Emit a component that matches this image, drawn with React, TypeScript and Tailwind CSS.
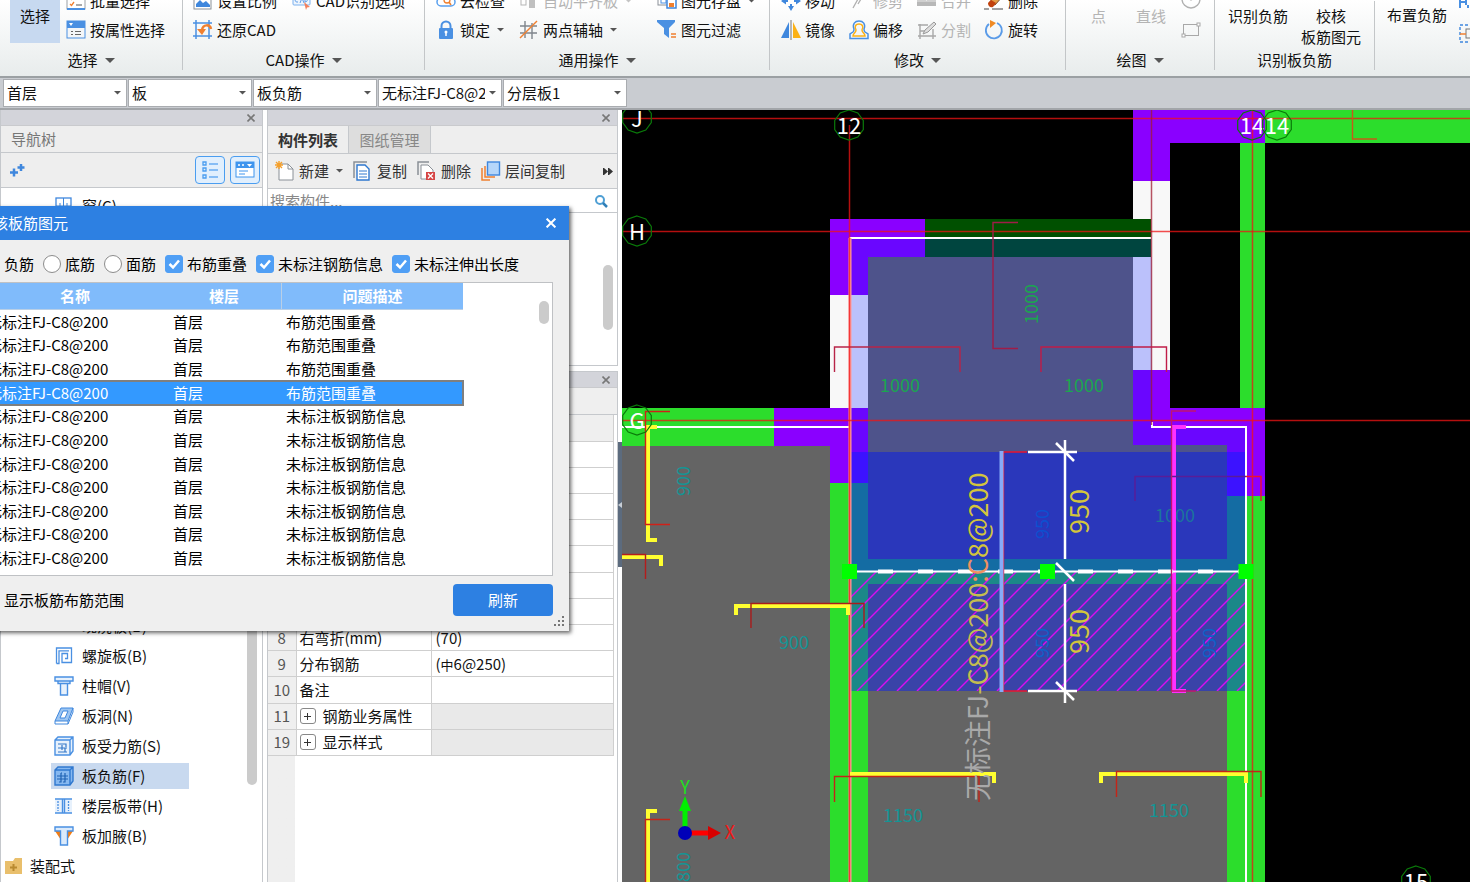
import type { ReactNode } from "react";

interface IconProps {
  children: ReactNode;
  size?: number;
}

// All toolbar icons share a 20x20 box
const Icon = ({ children, size = 20 }: IconProps) => (
  <svg width={size} height={size} viewBox="0 0 20 20" fill="none" className="shrink-0" aria-hidden="true">
    {children}
  </svg>
);

const Caret = ({ className = "w-2 text-[#555]" }: { className?: string }) => (
  <svg viewBox="0 0 8 4" className={`shrink-0 ${className}`} aria-hidden="true">
    <path d="M0 0h8L4 4z" fill="currentColor" />
  </svg>
);

const CloseIcon = ({ size = 8 }: { size?: number }) => (
  <svg width={size} height={size} viewBox="0 0 8 8" stroke="currentColor" strokeWidth="1.600" aria-hidden="true">
    <path d="M0.5 0.5l7 7M7.5 0.5l-7 7" />
  </svg>
);

const icons = {
  batch: (
    <>
      <rect x="1" y="1" width="18" height="17" stroke="#9aa0a6" fill="#fff" />
      <path d="M1 18h18" stroke="#4a90e2" strokeWidth="2" />
      <path d="M4 7l1.500 1.500L8 5M4 13l1.500 1.500L8 11" stroke="#f08030" strokeWidth="1.300" />
      <path d="M10 7h6M10 14h6" stroke="#555" />
    </>
  ),
  property: (
    <>
      <rect x="1" y="1" width="18" height="17" stroke="#4a90e2" fill="#f4f6f8" />
      <rect x="1" y="1" width="18" height="7" fill="#4a90e2" />
      <path d="M3 3h4L5 6z" fill="#fff" />
      <path d="M5 11.500h2M9 11.500h6M5 14.500h2M9 14.500h6" stroke="#666" />
    </>
  ),
  scale: (
    <>
      <rect x="1" y="1" width="17" height="17" stroke="#8a9097" fill="#fff" />
      <path d="M3 16v-3l4-4 3 3 3-2 4 4v2z" fill="#3f87dd" />
    </>
  ),
  restore: (
    <>
      <path d="M3 0v19M16 0v19M0 3h19M0 16h19" stroke="#4a90e2" strokeWidth="1.500" />
      <path d="M18 9c-1-5-8-5-9 1" stroke="#f08030" strokeWidth="2.500" />
      <path d="M4 9h9l-4 6z" fill="#f08030" />
    </>
  ),
  cadOption: (
    <>
      <rect x="1" y="4" width="17" height="10" rx="1" stroke="#7ab0ee" fill="#eef5fd" />
      <path d="M6 7c-3-1-4 4-1 4h1M8 12l2-5 2 5M13 7v4c3 0 3-4 0-4" stroke="#5a9be8" />
      <path d="M12 11l6 5-3 .5-1 2.500z" fill="#f4805c" />
    </>
  ),
  cloud: (
    <>
      <path d="M5 15a4 4 0 0 1 0-8 6 5 0 0 1 10 0 4 4 0 0 1 0 8z" stroke="#5aa0ee" strokeWidth="1.500" fill="#fff" />
      <circle cx="11" cy="9" r="3" stroke="#f08030" strokeWidth="1.300" />
      <path d="M13 11l2 3" stroke="#f08030" strokeWidth="1.500" />
    </>
  ),
  lock: (
    <>
      <path d="M5.500 9V6a4.500 4.500 0 0 1 9 0v3" stroke="#4a90e2" strokeWidth="2" />
      <rect x="3" y="8" width="14" height="11" rx="1" fill="#4a90e2" />
      <circle cx="10" cy="12" r="1.500" fill="#fff" />
      <path d="M10 12v4" stroke="#fff" strokeWidth="1.500" />
    </>
  ),
  align: (
    <>
      <rect x="2" y="5" width="5" height="9" stroke="#b5b5b5" />
      <rect x="10" y="1" width="6" height="16" fill="#c0c0c0" />
    </>
  ),
  gridAxis: (
    <>
      <path d="M6 1v17M13 3v16M1 6h17M1 13h17" stroke="#7f858c" strokeWidth="1.400" />
      <path d="M1 18L18 1" stroke="#f08030" strokeWidth="1.400" />
    </>
  ),
  save: (
    <>
      <rect x="1" y="1" width="12" height="13" stroke="#8a9097" />
      <rect x="4" y="6" width="5" height="6" stroke="#4a90e2" />
      <rect x="10" y="6" width="9" height="11" stroke="#3f87dd" strokeWidth="1.500" fill="#fff" />
      <rect x="12" y="12" width="5" height="4" fill="#f08030" />
    </>
  ),
  filter: (
    <>
      <path d="M0 0h18v2l-6 6v10l-5-4V8L0 2z" fill="#4a90e2" />
      <path d="M14 14h5M14 17h5" stroke="#f08030" strokeWidth="1.300" />
    </>
  ),
  move: (
    <>
      <path d="M10 0l3 4H7zM10 20l-3-5h6zM0 10l5-3.500v7zM20 10l-5 3.500v-7z" fill="#3f87dd" />
      <path d="M10 3v4M10 13v4M3 10h4M13 10h4" stroke="#3f87dd" strokeWidth="2" />
    </>
  ),
  mirror: (
    <>
      <path d="M8 2v16H0z" fill="#3f87dd" />
      <path d="M12 2v16h8z" fill="#fbb116" />
      <path d="M10 0v20" stroke="#777" />
    </>
  ),
  trim: <path d="M1 8h8M12 8h7M9 8L4 17M12 8l-3 5" stroke="#b0b0b0" strokeWidth="1.300" />,
  offset: (
    <>
      <path d="M1 18.500v-4.500l3-2c1-1 1-2 1-3-2-5 1-8 5-8s7 3 5 8c0 1 0 2 1 3l3 2v4.500z" stroke="#4a90e2" strokeWidth="1.500" />
      <path d="M4 16h12c0-3-3-3-3-6 2-4 0-6-3-6S5 6 7 10c0 3-3 3-3 6z" stroke="#fbb116" strokeWidth="1.500" />
    </>
  ),
  merge: (
    <>
      <rect x="0" y="6" width="19" height="9" fill="#b8b8b8" />
      <path d="M9.500 6v4M0 10h19" stroke="#e8e8e8" />
    </>
  ),
  split: (
    <>
      <path d="M1 5h10M1 16h18M3 4v15M16 9v10M3 11h5" stroke="#a8a8a8" strokeWidth="1.400" />
      <path d="M6 14l2-4L17 2l2 2-8 8z" stroke="#999" fill="#ddd" />
    </>
  ),
  erase: (
    <>
      <path d="M5 12L13 2l6 3-8 9z" fill="#e29a45" stroke="#7d5230" />
      <path d="M4 12l3-3 5 3-3 4c-3 1-5-1-5-4z" fill="#c2410c" />
      <path d="M0 18h5M8 18h11" stroke="#444" />
    </>
  ),
  rotate: (
    <>
      <path d="M13 3a8 8 0 1 1-8 1" stroke="#5a9be8" strokeWidth="1.800" />
      <path d="M6 0l6 3-6 5z" fill="#f08a24" />
    </>
  ),
};

const treeIcons = {
  window: (
    <>
      <rect x="2" y="2" width="15" height="15" stroke="#3f87dd" strokeWidth="1.300" />
      <path d="M9.500 2v15M2 10h15M6 7v5M13 7v5" stroke="#3f87dd" />
    </>
  ),
  spiral: (
    <path d="M2.500 17.500V2h15v14.500H8V7.500h5.500v5H11M2.500 17.500H5V4.800h10" stroke="#4a90e2" strokeWidth="1.300" />
  ),
  cap: (
    <path d="M1 1h18v4H1zM4 5v2.500h12V5M6.500 7.500V19h7V7.500" stroke="#4a90e2" strokeWidth="1.400" fill="#e7f1fc" />
  ),
  hole: (
    <>
      <path d="M7 2h12l-5 13H1z" fill="#9cc5f2" stroke="#3f87dd" />
      <path d="M1 15v3h13l5-12V2M14 15v3" stroke="#3f87dd" />
      <path d="M9 5h5l-3 7H6z" fill="#fff" stroke="#3f87dd" />
    </>
  ),
  mainBar: (
    <>
      <path d="M1 4l3-3h15v14l-3 4H1zM1 4h15v15M16 4l3-3" stroke="#4a90e2" fill="#e7f1fc" strokeWidth="1.400" />
      <path d="M4 8h8v3M4 12h9M4 16h9M8 9v5M11 12v4" stroke="#3478c8" strokeWidth="1.200" />
    </>
  ),
  negBar: (
    <>
      <path d="M1 4l3-3h15v14l-3 4H1zM1 4h15v15M16 4l3-3" stroke="#2f78cf" fill="#86b8f0" strokeWidth="1.400" />
      <path d="M3 10h11M3 13h11M7 7v9H5M11 7v9H9M7 7h1" stroke="#1f62b4" strokeWidth="1.200" />
    </>
  ),
  strip: (
    <>
      <path d="M1 3h17v14H1z" fill="#e7f1fc" />
      <path d="M1 3h17M1 17h17M8.500 3v14M10.500 3v14" stroke="#4a90e2" strokeWidth="1.400" />
      <path d="M4 5v10M14.500 5v10" stroke="#4a90e2" strokeDasharray="2 1" strokeWidth="1.300" />
    </>
  ),
  haunch: (
    <>
      <path d="M1 5h6v9zM19 5h-6v9z" fill="#f47d12" />
      <path d="M1 1h18v4h-5.500v14h-7V5H1z" stroke="#4a90e2" strokeWidth="1.400" fill="#dbeafb" />
    </>
  ),
};

interface ToolProps {
  icon: keyof typeof icons;
  label: string;
  caret?: boolean;
  disabled?: boolean;
}

const Tool = ({ icon, label, caret, disabled }: ToolProps) => (
  <button
    type="button"
    disabled={disabled}
    className="flex h-5 items-center gap-1 whitespace-nowrap leading-5 disabled:text-[#b4b4b4]"
  >
    <Icon>{icons[icon]}</Icon>
    {label}
    {caret && (
      <span className="pl-[3px]">
        <Caret className={disabled ? "w-[7px] text-[#c4c4c4]" : "w-[7px] text-[#555]"} />
      </span>
    )}
  </button>
);

const RibbonGroup = ({ label, caret = true, className, children }: { label?: string; caret?: boolean; className: string; children: ReactNode }) => (
  <section className={`flex shrink-0 flex-col justify-end border-r border-[#c3c6c8] ${className}`}>
    {children}
    <div className="mt-[7px] flex h-5 items-center justify-center gap-[7px] leading-5">
      {label}
      {label && caret && <Caret className="w-[10px] text-[#555]" />}
    </div>
  </section>
);

const Ribbon = () => (
  <header className="flex h-[78px] items-end overflow-hidden border-b-2 border-[#9ba0a3] bg-linear-to-b from-white to-[#e8ecec] pb-[6px]">
    <RibbonGroup label="选择" className="w-[183px]">
      <div className="flex items-end gap-[6px] pl-[10px]">
        <button type="button" className="flex h-20 w-[50px] items-end justify-center bg-[#c7d9f0] pb-[17px] leading-5">
          选择
        </button>
        <div className="flex flex-col gap-[9px] pb-[3px]">
          <Tool icon="batch" label="批量选择" />
          <Tool icon="property" label="按属性选择" />
        </div>
      </div>
    </RibbonGroup>
    <RibbonGroup label="CAD操作" className="w-[242px]">
      <div className="grid grid-cols-[99px_auto] gap-y-[9px] pb-[3px] pl-[10px]">
        <Tool icon="scale" label="设置比例" />
        <Tool icon="cadOption" label="CAD识别选项" />
        <Tool icon="restore" label="还原CAD" />
      </div>
    </RibbonGroup>
    <RibbonGroup label="通用操作" className="w-[345px]">
      <div className="grid grid-cols-[83px_138px_auto] gap-y-[9px] pb-[3px] pl-[11px]">
        <Tool icon="cloud" label="云检查" />
        <Tool icon="align" label="自动平齐板" caret disabled />
        <Tool icon="save" label="图元存盘" caret />
        <Tool icon="lock" label="锁定" caret />
        <Tool icon="gridAxis" label="两点辅轴" caret />
        <Tool icon="filter" label="图元过滤" />
      </div>
    </RibbonGroup>
    <RibbonGroup label="修改" className="w-[296px]">
      <div className="grid grid-cols-[68px_68px_67px_auto] gap-y-[9px] pb-[3px] pl-[11px]">
        <Tool icon="move" label="移动" />
        <Tool icon="trim" label="修剪" disabled />
        <Tool icon="merge" label="合并" disabled />
        <Tool icon="erase" label="删除" />
        <Tool icon="mirror" label="镜像" />
        <Tool icon="offset" label="偏移" />
        <Tool icon="split" label="分割" disabled />
        <Tool icon="rotate" label="旋转" />
      </div>
    </RibbonGroup>
    <RibbonGroup label="绘图" className="w-[149px]">
      <div className="flex items-end pb-[3px] pl-[25px] text-[#b4b4b4]">
        <button type="button" disabled className="mb-[14px] leading-5">点</button>
        <button type="button" disabled className="mb-[14px] ml-[30px] leading-5">直线</button>
        <div className="ml-[15px] flex flex-col gap-[9px]">
          <Icon>
            <circle cx="10" cy="8" r="9" stroke="#b0b0b0" strokeWidth="1.400" />
            <circle cx="10" cy="8" r="1.500" fill="#b0b0b0" />
          </Icon>
          <Icon>
            <rect x="2.500" y="4.500" width="15" height="11" stroke="#a8a8a8" />
            <rect x="1" y="14" width="3" height="3" fill="#fff" stroke="#a8a8a8" />
            <rect x="16" y="3" width="3" height="3" fill="#fff" stroke="#a8a8a8" />
          </Icon>
        </div>
      </div>
    </RibbonGroup>
    <RibbonGroup label="识别板负筋" caret={false} className="w-[160px] pt-1">
      <div className="-mb-1 flex items-start justify-center gap-[13px]">
        <button type="button" className="leading-[21px]">识别负筋</button>
        <button type="button" className="leading-[21px]">
          校核
          <br />
          板筋图元
        </button>
      </div>
    </RibbonGroup>
    <section className="flex min-w-0 flex-1 items-end overflow-hidden pb-[26px] pl-3">
      <button type="button" className="shrink-0 pb-[19px] leading-5">布置负筋</button>
      <div className="ml-3 flex flex-col gap-1">
        <Icon>
          <path d="M1 0v8M1 2h6M7 0v5M9 5v3" stroke="#4a90e2" strokeWidth="2" />
        </Icon>
        <Icon>
          <rect x="1" y="1" width="18" height="17" stroke="#3f87dd" strokeWidth="1.400" strokeDasharray="3 2" />
          <rect x="7" y="5" width="10" height="9" stroke="#777" />
          <path d="M1 10h6" stroke="#f08030" strokeWidth="1.500" />
        </Icon>
      </div>
    </section>
  </header>
);

const selectors = [
  { name: "楼层", value: "首层" },
  { name: "构件类别", value: "板" },
  { name: "构件类型", value: "板负筋" },
  { name: "构件", value: "无标注FJ-C8@200" },
  { name: "分层", value: "分层板1" },
];

const SelectorBar = () => (
  <div className="flex h-8 items-center gap-px border-b-2 border-[#a2a5a9] bg-[#c9ccd1] pl-[3px]">
    {selectors.map((item) => (
      <div key={item.name} className="relative">
        <select
          aria-label={item.name}
          className="block h-7 w-[124px] appearance-none overflow-hidden border border-[#a9acb0] bg-white pr-4 pl-[3px] leading-6"
        >
          <option>{item.value}</option>
        </select>
        <span className="pointer-events-none absolute top-3 right-[6px]">
          <Caret className="w-[7px] text-[#555]" />
        </span>
      </div>
    ))}
  </div>
);

const PanelStrip = () => (
  <div className="flex h-4 shrink-0 items-center justify-end border-b border-[#c9cacd] bg-[#d3d4da] pr-[7px] text-[#777]">
    <button type="button" aria-label="关闭">
      <CloseIcon />
    </button>
  </div>
);

const treeItems: { icon: keyof typeof treeIcons; label: string; active?: boolean }[] = [
  { icon: "spiral", label: "螺旋板(B)" },
  { icon: "cap", label: "柱帽(V)" },
  { icon: "hole", label: "板洞(N)" },
  { icon: "mainBar", label: "板受力筋(S)" },
  { icon: "negBar", label: "板负筋(F)", active: true },
  { icon: "strip", label: "楼层板带(H)" },
  { icon: "haunch", label: "板加腋(B)" },
];

const NavTree = () => (
  <aside className="flex w-[263px] shrink-0 flex-col border-x border-[#c5c8cc] bg-white">
    <PanelStrip />
    <h2 className="flex h-[27px] shrink-0 items-center border-b border-[#c5c8cc] bg-[#eeeeee] pl-[10px] text-[#777]">导航树</h2>
    <div className="flex h-[35px] shrink-0 items-center justify-end gap-[5px] border-b border-[#c5c8cc] bg-[#eeeeee] px-[2px]">
      <button type="button" aria-label="展开" className="mr-auto ml-[6px]">
        <svg width="17" height="15" viewBox="0 0 17 15" stroke="#3f87dd" strokeWidth="2.500" aria-hidden="true">
          <path d="M1 9.500h8M5 5.500v8M8.500 4.500h7M12 1v7" />
        </svg>
      </button>
      <button type="button" aria-label="列表" className="flex h-7 w-[30px] items-center justify-center rounded border border-[#4a9df0] bg-[#e1effd]">
        <Icon>
          <path d="M3 2h3v3H3zM3 8h3v3H3zM3 15h3v3H3z" stroke="#4a9df0" strokeWidth="1.300" />
          <path d="M9 4h9M9 10h9M9 17h9" stroke="#6aadf2" strokeWidth="1.300" />
        </Icon>
      </button>
      <button type="button" aria-label="窗口" className="flex h-7 w-[30px] items-center justify-center rounded border border-[#4a9df0] bg-[#e1effd]">
        <Icon>
          <rect x="1" y="2" width="18" height="15" stroke="#3f95ee" fill="#fff" />
          <rect x="1" y="2" width="18" height="6" fill="#3f95ee" />
          <path d="M3 5h2M7 5h2" stroke="#fff" strokeWidth="1.500" />
          <path d="M12 4h5l-2.500 3z" fill="#fff" />
          <path d="M4 11h9M4 14h6" stroke="#3f95ee" />
        </Icon>
      </button>
    </div>
    <div className="flex min-h-0 flex-1 overflow-hidden">
      <ul className="flex flex-1 flex-col pt-[3px] text-[#111]">
        <li className="mb-[390px] flex h-[30px] shrink-0 items-center gap-2 pl-[53px]">
          <Icon>{treeIcons.window}</Icon>
          窗(C)
        </li>
        <li className="flex h-[30px] shrink-0 items-center pl-[81px]">现浇板(B)</li>
        {treeItems.map((item) => (
          <li key={item.label} className="flex h-[30px] shrink-0 items-center pl-[50px]">
            <a
              href="#"
              className={`flex h-[26px] w-[138px] items-center gap-2 pl-[3px] ${item.active ? "bg-[#c8d9ef]" : ""}`}
            >
              <Icon>{treeIcons[item.icon]}</Icon>
              {item.label}
            </a>
          </li>
        ))}
        <li className="flex h-[30px] shrink-0 items-center gap-[6px] pl-[3px]">
          <Icon>
            <path d="M1 5h8l2-3h7v16H1z" fill="#e9bf6c" />
            <path d="M9.500 8v7M6 11.500h7" stroke="#b98a30" strokeWidth="2" />
          </Icon>
          装配式
        </li>
      </ul>
      <div className="w-[15px] pt-[180px]">
        <div className="h-[417px] w-[10px] rounded-full bg-[#cbcbcb]" />
      </div>
    </div>
  </aside>
);

const DocTool = ({ label, caret, children }: { label: string; caret?: boolean; children: ReactNode }) => (
  <button type="button" className="flex items-center gap-1 whitespace-nowrap">
    <Icon>{children}</Icon>
    {label}
    {caret && (
      <span className="pl-[3px]">
        <Caret className="w-[7px] text-[#555]" />
      </span>
    )}
  </button>
);

const ComponentList = () => (
  <section className="flex h-64 shrink-0 flex-col border border-t-0 border-[#c5c8cc]">
    <PanelStrip />
    <div className="flex h-7 shrink-0 border-b border-[#c5c8cc] bg-[#eeeeee]">
      <button type="button" className="w-[81px] border-r border-[#c5c8cc] font-bold text-[#333]">构件列表</button>
      <button type="button" className="w-[82px] border-r border-[#c5c8cc] bg-[#dddddd] text-[#888]">图纸管理</button>
    </div>
    <div className="flex h-[35px] shrink-0 items-center gap-[10px] border-b border-[#c5c8cc] bg-[#eeeeee] pl-[7px] text-[#333]">
      <DocTool label="新建" caret>
        <path d="M4 3h9l5 5v11H4z" fill="#fff" stroke="#8a9097" />
        <path d="M13 3v5h5" stroke="#8a9097" />
        <path d="M4 0v8M0 4h8M1 1l6 6M7 1L1 7" stroke="#f5a02c" strokeWidth="1.400" />
      </DocTool>
      <DocTool label="复制">
        <path d="M1 17V1h13" stroke="#8a9097" strokeWidth="1.500" />
        <path d="M4 4h8l4 4v11H4z" fill="#fff" stroke="#2f78cf" strokeWidth="1.400" />
        <path d="M6 10h8M6 13h8M6 16h8" stroke="#2f78cf" />
      </DocTool>
      <DocTool label="删除">
        <path d="M1 14V1h11" stroke="#8a9097" strokeWidth="1.500" />
        <path d="M4 4h7l5 5v9H4z" fill="#fff" stroke="#8a9097" />
        <path d="M9 11h9v8H9z" fill="#d64545" />
        <path d="M11 12.500l5 5M16 12.500l-5 5" stroke="#fff" strokeWidth="1.300" />
      </DocTool>
      <DocTool label="层间复制">
        <path d="M1 7v12h8M4 5v11h10" stroke="#f08030" strokeWidth="1.500" />
        <rect x="6.500" y="1" width="12" height="13" fill="#b5d6fa" stroke="#3f87dd" strokeWidth="1.400" />
      </DocTool>
      <button type="button" aria-label="更多" className="ml-auto pr-1">
        <svg width="10" height="7" viewBox="0 0 10 7" fill="#333" aria-hidden="true">
          <path d="M0 0h1l4 3.500L1 7H0zM5 0h1l4 3.500L6 7H5z" />
        </svg>
      </button>
    </div>
    <label className="flex h-[24px] shrink-0 items-center border-b border-[#c5c8cc] bg-white pr-[9px]">
      <input type="text" aria-label="搜索构件" placeholder="搜索构件..." className="w-full min-w-0 px-[2px] placeholder:text-[#888] focus:outline-none" />
      <svg width="14" height="14" viewBox="0 0 14 14" fill="none" className="shrink-0" aria-hidden="true">
        <circle cx="6" cy="6" r="4" stroke="#4f9fd4" strokeWidth="2" />
        <path d="M9 9l4 4" stroke="#2f7fb8" strokeWidth="2.500" />
      </svg>
    </label>
    <div className="flex min-h-0 flex-1 justify-end bg-white pt-[52px] pr-1">
      <div className="h-[65px] w-[10px] rounded-full bg-[#cbcbcb]" />
    </div>
  </section>
);

interface PropertyRow {
  no: string;
  name: string;
  value: ReactNode;
  group?: boolean;
}

const properties: PropertyRow[] = [
  { no: "8", name: "右弯折(mm)", value: "(70)" },
  {
    no: "9",
    name: "分布钢筋",
    value: (
      <>
        (<span className="text-[13px] leading-4">中</span>6@250)
      </>
    ),
  },
  { no: "10", name: "备注", value: "" },
  { no: "11", name: "钢筋业务属性", value: "", group: true },
  { no: "19", name: "显示样式", value: "", group: true },
];

const PropertyPanel = () => (
  <section className="mt-[5px] flex min-h-0 flex-1 flex-col border border-b-0 border-[#c5c8cc]">
    <PanelStrip />
    <div className="h-[27px] shrink-0 border-b border-[#c5c8cc] bg-[#efefef]" />
    <div className="min-h-0 flex-1 overflow-hidden bg-linear-to-r from-[#efefef] from-[27px] to-white to-[27px] pr-[3px]">
      <table className="h-[341px] w-full table-fixed border-collapse text-[#111]">
        <colgroup>
          <col className="w-[28px]" />
          <col className="w-[135px]" />
          <col />
        </colgroup>
        <tbody>
          <tr className="h-[26px] bg-[#efefef]">
            <td className="border-r border-b border-[#cfcfcf] p-0" />
            <td className="border-r border-b border-[#cfcfcf] p-0" />
            <td className="border-r border-b border-[#cfcfcf] p-0" />
          </tr>
          {Array.from({ length: 7 }, (_, i) => (
            <tr key={i} className="h-[26px]">
              <td className="border-r border-b border-[#cfcfcf] bg-[#efefef] p-0" />
              <td className="border-r border-b border-[#cfcfcf] bg-white p-0" />
              <td className="border-r border-b border-[#cfcfcf] bg-white p-0" />
            </tr>
          ))}
          {properties.map((row) => (
            <tr key={row.no} className="h-[26px] leading-5">
              <td className="border-r border-b border-[#cfcfcf] bg-[#efefef] p-0 text-center text-[#555]">{row.no}</td>
              <td className="border-r border-b border-[#cfcfcf] bg-white py-0 pl-[3px]">
                <div className="flex items-center gap-[7px]">
                  {row.group && (
                    <button type="button" aria-label="展开" className="flex size-4 items-center justify-center rounded-[3px] border border-[#888]">
                      <svg width="7" height="7" viewBox="0 0 7 7" stroke="#333" aria-hidden="true">
                        <path d="M0 3.500h7M3.500 0v7" />
                      </svg>
                    </button>
                  )}
                  {row.name}
                </div>
              </td>
              <td className={`border-r border-b border-[#cfcfcf] py-0 pl-1 ${row.group ? "bg-[#e9e9e9]" : "bg-white"}`}>{row.value}</td>
            </tr>
          ))}
        </tbody>
      </table>
    </div>
  </section>
);

const filters = [
  { type: "radio", label: "负筋" },
  { type: "radio", label: "底筋" },
  { type: "radio", label: "面筋" },
  { type: "checkbox", label: "布筋重叠" },
  { type: "checkbox", label: "未标注钢筋信息" },
  { type: "checkbox", label: "未标注伸出长度" },
];

const issues = [
  ...Array.from({ length: 4 }, () => "布筋范围重叠"),
  ...Array.from({ length: 7 }, () => "未标注板钢筋信息"),
];
const SELECTED_ISSUE = 3;

const Check = ({ label, checked }: { label: string; checked?: boolean }) => (
  <label className="flex items-center gap-1 whitespace-nowrap">
    <span className="relative size-[18px]">
      <input
        type="checkbox"
        defaultChecked={checked}
        className="block size-[18px] appearance-none rounded-[3px] border border-[#999] bg-white checked:border-[#509ff5] checked:bg-[#509ff5]"
      />
      {checked && (
        <svg viewBox="0 0 18 18" fill="none" className="pointer-events-none absolute inset-0" aria-hidden="true">
          <path d="M4.500 9l3.500 3.500L14 5.500" stroke="#fff" strokeWidth="2.500" />
        </svg>
      )}
    </span>
    {label}
  </label>
);

const CheckDialog = () => (
  <div role="dialog" aria-label="校核板筋图元" className="absolute top-[206px] -left-[34px] w-[603px] bg-[#efefef] text-black shadow-[2px_2px_4px_rgba(0,0,0,0.6)]">
    <div className="flex h-[34px] items-center justify-between bg-[#2d80e2] pr-[13px] pl-3 text-white">
      <h2>校核板筋图元</h2>
      <button type="button" aria-label="关闭">
        <CloseIcon size={10} />
      </button>
    </div>
    <div className="px-4">
      <div className="flex h-[42px] items-center gap-[9px] pt-[6px]">
        {filters.map((item) =>
          item.type === "radio" ? (
            <label key={item.label} className="flex items-center gap-1 whitespace-nowrap">
              <input type="radio" name="kind" className="size-[18px] appearance-none rounded-full border border-[#8c8c8c] bg-white checked:border-[5px] checked:border-[#509ff5]" />
              {item.label}
            </label>
          ) : (
            <Check key={item.label} label={item.label} checked />
          ),
        )}
      </div>
      <div className="flex h-[294px] justify-between overflow-hidden border border-[#bfc1c4] bg-white pr-[3px]">
        <table className="h-[287px] w-[480px] table-fixed border-separate border-spacing-0">
          <colgroup>
            <col className="w-[184px]" />
            <col className="w-[115px]" />
            <col className="w-[181px]" />
          </colgroup>
          <thead>
            <tr className="bg-[#80bbfb] text-white">
              <th className="h-[27px] border-b border-[#b9cfe6] p-0 leading-5">名称</th>
              <th className="border-r border-b border-[#b9cfe6] p-0 leading-5">楼层</th>
              <th className="border-b border-[#b9cfe6] p-0 leading-5">问题描述</th>
            </tr>
          </thead>
          <tbody>
            {issues.map((issue, i) => (
              <tr
                key={i}
                className={`leading-5 ${i === SELECTED_ISSUE ? "bg-[#3399ff] text-white outline-2 -outline-offset-1 outline-[#7f7f7f]" : ""}`}
              >
                <td className="p-0 pl-1">无标注FJ-C8@200</td>
                <td className="p-0 pl-[6px]">首层</td>
                <td className="p-0 pl-1">{issue}</td>
              </tr>
            ))}
          </tbody>
        </table>
        <div className="mt-[18px] h-[23px] w-[10px] rounded-full bg-[#cbcbcb]" />
      </div>
      <div className="flex h-[55px] items-center justify-between pb-[7px]">
        <Check label="显示板筋布筋范围" />
        <button type="button" className="h-8 w-[100px] rounded bg-[#2d80e2] text-white">刷新</button>
      </div>
    </div>
    <svg width="12" height="12" viewBox="0 0 12 12" fill="#777" className="absolute right-1 bottom-1" aria-hidden="true">
      <path d="M9 1h2v2H9zM9 5h2v2H9zM5 5h2v2H5zM1 9h2v2H1zM5 9h2v2H5zM9 9h2v2H9z" />
    </svg>
  </div>
);

// Plan drawing
type Box = [x1: number, y1: number, x2: number, y2: number, color: string];

const boxes: Box[] = [
  [622, 445, 1265, 882, "#646464"],
  [868, 257, 1133, 452, "#4e538b"],
  [1133, 445, 1227, 452, "#4e538b"],
  // beams
  [622, 408, 774, 446, "#2cdd2c"],
  [830, 483, 868, 882, "#2cdd2c"],
  [1227, 496, 1265, 882, "#2cdd2c"],
  [1265, 110, 2400, 143, "#2cdd2c"],
  [1240, 143, 1265, 408, "#2cdd2c"],
  // walls
  [830, 219, 925, 257, "#8a00ff"],
  [830, 257, 868, 295, "#8a00ff"],
  [850, 238, 925, 257, "#6a06ff"],
  [850, 257, 868, 295, "#6a06ff"],
  [774, 408, 868, 446, "#8a00ff"],
  [830, 445, 868, 483, "#8a00ff"],
  [850, 408, 868, 452, "#6a06ff"],
  [850, 452, 868, 483, "#3c12ff"],
  [1133, 110, 1265, 143, "#8a00ff"],
  [1133, 143, 1170, 181, "#8a00ff"],
  [1133, 370, 1170, 408, "#8a00ff"],
  [1133, 408, 1265, 445, "#8a00ff"],
  [1227, 445, 1265, 496, "#8a00ff"],
  [1133, 370, 1152, 445, "#6a06ff"],
  [1152, 427, 1246, 445, "#6a06ff"],
  [1227, 445, 1246, 452, "#6a06ff"],
  [1227, 452, 1246, 496, "#3c12ff"],
  // openings
  [830, 295, 850, 408, "#f8f8f8"],
  [850, 295, 868, 408, "#bbc1fb"],
  [1133, 181, 1170, 370, "#f8f8f8"],
  [1133, 257, 1152, 370, "#bbc1fb"],
  [925, 219, 1151, 238, "#005000"],
  [925, 238, 1151, 257, "#00453f"],
  // rebar range
  [868, 452, 1227, 559, "#2a37bb"],
  [850, 483, 868, 571, "#146ca3"],
  [1227, 496, 1246, 571, "#146ca3"],
  [868, 559, 1227, 571, "#146ca3"],
  [850, 571, 1246, 691, "#1b8888"],
  [868, 584, 1227, 691, "#3943a8"],
];

const redMarks = [
  { d: "M1352.500 110V139H1377", color: "#c85a18" },
  { d: "M1018 222.500H993V348.500H1018", color: "#a01c48" },
  { d: "M834.500 372V347H960V372", color: "#b82448" },
  { d: "M1041 372V347H1166.500V372", color: "#c01c48" },
  { d: "M1135 501V476.500H1246", color: "#5a1c98" },
  { d: "M1246 476.500H1261V501", color: "#f0102c" },
  { d: "M1196 411H1171.500V691H1196", color: "#c01470" },
  { d: "M1027 452H1003.500V691H1027", color: "#e81430" },
  { d: "M670 411.500H645.500V524.500H670", color: "#d02018" },
  { d: "M622 554.500H645.500V579", color: "#b41c1c" },
  { d: "M751 628V603.500H864V628", color: "#a81c1c" },
  { d: "M834.500 802V776.500H979V802", color: "#c42418" },
  { d: "M670 819.500H645.500V882", color: "#c42418" },
  { d: "M1116.500 797V771.500H1261V797", color: "#c42418" },
];

const yellowBars = [
  "M657 427H648V540H657",
  "M622 557H661V566",
  "M736 615V606H848V615",
  "M850 774H994V783",
  "M657 811H648V882",
  "M1101 783V774H1246V783",
];

const axes = [
  { x: 637, y: 118, label: "J" },
  { x: 637, y: 231, label: "H" },
  { x: 637, y: 420, label: "G" },
  { x: 849, y: 125, label: "12" },
  { x: 1252, y: 125, label: "14" },
  { x: 1277, y: 125, label: "14" },
  { x: 1416, y: 881, label: "15" },
];

const dims = [
  { x: 900, y: 385, text: "1000", color: "#1aa650" },
  { x: 1084, y: 385, text: "1000", color: "#1aa650" },
  { x: 1031, y: 304, text: "1000", color: "#1aa650", turn: true },
  { x: 683, y: 481, text: "900", color: "#149494", turn: true },
  { x: 794, y: 642, text: "900", color: "#149494" },
  { x: 1175, y: 515, text: "1000", color: "#1c749c" },
  { x: 1042, y: 524, text: "950", color: "#0d4fd0", turn: true },
  { x: 1042, y: 643, text: "950", color: "#0d62c8", turn: true },
  { x: 1209, y: 643, text: "950", color: "#0d62c8", turn: true },
  { x: 903, y: 815, text: "1150", color: "#149494" },
  { x: 1169, y: 810, text: "1150", color: "#149494" },
  { x: 683, y: 867, text: "800", color: "#149494", turn: true },
];

const ringPoints = (cx: number, cy: number) =>
  Array.from({ length: 10 }, (_, i) => {
    const a = (i * Math.PI) / 5 - Math.PI / 2;
    return `${(cx + 15 * Math.cos(a)).toFixed(1)},${(cy + 15 * Math.sin(a)).toFixed(1)}`;
  }).join(" ");

const PlanCanvas = () => (
  <main className="min-w-0 flex-1 overflow-hidden bg-black">
    <svg
      viewBox="622 110 848 772"
      preserveAspectRatio="xMinYMin slice"
      fill="none"
      className="block h-full w-full font-['Noto_Sans_CJK_SC',sans-serif]"
    >
      <clipPath id="hatch">
        <rect x="850" y="572" width="396" height="119" />
      </clipPath>
      <g shapeRendering="crispEdges">
        {boxes.map(([x1, y1, x2, y2, color]) => (
          <rect key={`${x1}-${y1}-${x2}-${color}`} x={x1} y={y1} width={x2 - x1} height={y2 - y1} fill={color} />
        ))}
      </g>
      <g clipPath="url(#hatch)" stroke="#d90cf0" strokeWidth="1.400">
        {Array.from({ length: 27 }, (_, i) => 1428 + i * 20).map((sum) => (
          <path key={sum} d={`M${sum - 691} 691L${sum - 571} 571`} />
        ))}
      </g>

      {dims.map((d) => (
        <text
          key={`${d.x}-${d.y}`}
          transform={`translate(${d.x} ${d.y})${d.turn ? " rotate(-90)" : ""}`}
          y="7"
          textAnchor="middle"
          fill={d.color}
          className="text-[18px]"
        >
          {d.text}
        </text>
      ))}

      <g stroke="#fff" strokeWidth="2">
        <path d="M622 427H849M849 238H1151" />
        <path d="M1152 422V427H1246V882" />
      </g>
      <path d="M850 238V882" stroke="#ff9c9c" strokeWidth="3" />
      <g stroke="#f01414" strokeOpacity="0.75" strokeWidth="1.500">
        <path d="M622 118.500H2400M622 231.500H2400M622 420.500H2400" />
        <path d="M849.500 125V882M1252.500 110V882" />
        <path d="M1151.500 110V425" stroke="#a01c30" />
      </g>

      <g stroke="#ffff30" strokeWidth="4">
        {yellowBars.map((d) => (
          <path key={d} d={d} />
        ))}
      </g>
      <path d="M1186 427H1174V691H1186" stroke="#ff30ff" strokeWidth="4" />

      <g stroke="#fff" strokeWidth="2">
        <path d="M850 571.500H1246" />
        <path d="M878 571.500H1240" strokeWidth="4" strokeDasharray="15 25" />
        <path d="M1028 452H1077M1028 691H1077M1065 440V559M1065 584V703" strokeWidth="2.500" />
        <path d="M1056 443L1074 461M1056 563L1074 581M1056 682L1074 700" strokeWidth="2.500" />
      </g>
      <g strokeWidth="1.400">
        {redMarks.map((mark) => (
          <path key={mark.d} d={mark.d} stroke={mark.color} />
        ))}
      </g>
      <path d="M1001.500 451V692" stroke="#86abf8" strokeWidth="4" />
      <path d="M842 564h15v15h-15zM1040 564h15v15h-15zM1238.500 564h15v15h-15z" fill="#00ff00" />

      <g className="text-[27px]" fill="#d3c53c">
        <text transform="translate(988 801) rotate(-90)">
          <tspan fill="#a9a9a9">无标注FJ</tspan>
          <tspan fill="#c3bd50">-C8@200</tspan>
          <tspan fill="#ef9060">:C</tspan>
          8@200
        </text>
        <text transform="translate(1089 534) rotate(-90)">950</text>
        <text transform="translate(1089 654) rotate(-90)">950</text>
      </g>

      {axes.map((a) => (
        <g key={`${a.x}-${a.y}`}>
          <polygon points={ringPoints(a.x, a.y)} stroke="#0a7a0a" strokeWidth="1.200" />
          <text x={a.x} y={a.y + 9} textAnchor="middle" fill="#fff" className="text-[22px]">
            {a.label}
          </text>
        </g>
      ))}

      <path d="M685 828V810" stroke="#00f000" strokeWidth="5" />
      <path d="M679 811L685 796L691 811Z" fill="#00f000" />
      <path d="M690 833H709" stroke="#f00" strokeWidth="5" />
      <path d="M708 826L721 833L708 840Z" fill="#d80000" />
      <circle cx="685" cy="833" r="7" fill="#0000b8" />
      <text x="685" y="794" textAnchor="middle" fill="#20e020" className="text-[18px]">Y</text>
      <text x="730" y="839" textAnchor="middle" fill="#f01818" className="text-[18px]">X</text>
    </svg>
  </main>
);

const App = () => (
  <div className="relative flex h-screen flex-col overflow-hidden bg-white font-['Noto_Sans_CJK_SC',sans-serif] text-[15px] leading-5 text-[#111]">
    <Ribbon />
    <SelectorBar />
    <div className="flex min-h-0 flex-1">
      <NavTree />
      <div className="ml-1 flex w-[351px] shrink-0 flex-col">
        <ComponentList />
        <PropertyPanel />
      </div>
      <div className="w-1 shrink-0 pt-[332px]">
        <button type="button" aria-label="收起面板" className="flex h-[125px] w-full items-center justify-center bg-[#5c6b7e]">
          <svg width="4" height="6" viewBox="0 0 4 6" fill="#c8ced6" aria-hidden="true">
            <path d="M4 0v6L0 3z" />
          </svg>
        </button>
      </div>
      <PlanCanvas />
    </div>
    <CheckDialog />
  </div>
);

export default App;
